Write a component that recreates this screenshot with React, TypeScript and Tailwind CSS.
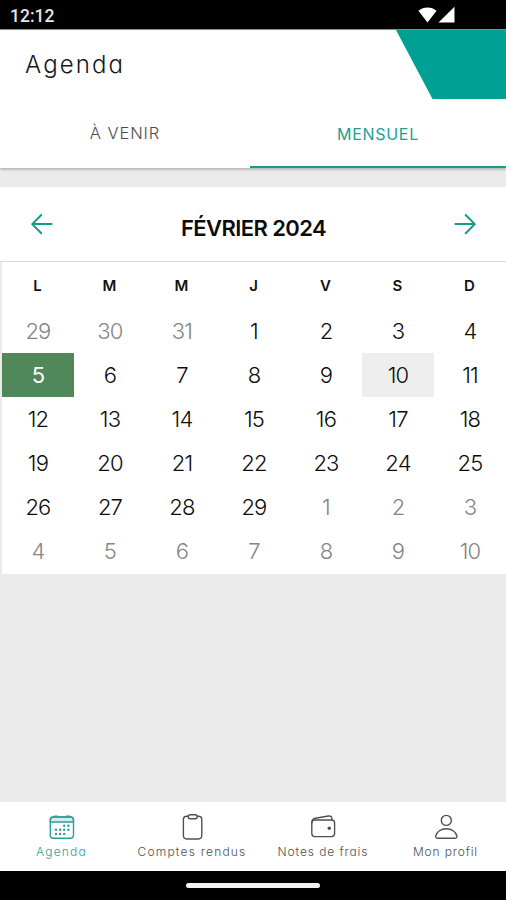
import React, { useState } from 'react';
import { clsx } from 'clsx';

interface Day {
  label: number;
  outside: boolean;
}

interface IconProps {
  className?: string;
  children?: React.ReactNode;
}

const weekDays = ['L', 'M', 'M', 'J', 'V', 'S', 'D'];

const range = (from: number, to: number, outside: boolean): Day[] =>
  Array.from({ length: to - from + 1 }, (_, i) => ({ label: from + i, outside }));

const days: Day[] = [...range(29, 31, true), ...range(1, 29, false), ...range(1, 10, true)];

const LineIcon: React.FC<IconProps> = ({ children }) => (
  <svg
    className="h-7 w-7"
    viewBox="0 0 28 28"
    fill="none"
    stroke="currentColor"
    strokeWidth="1.4"
    strokeLinecap="round"
    strokeLinejoin="round"
  >
    {children}
  </svg>
);

const dots = [
  [16.2, 12.7], [20.4, 12.7],
  [8, 16.8], [12.1, 16.8], [16.2, 16.8], [20.4, 16.8],
  [8, 21], [12.1, 21], [16.2, 21],
];

const CalendarIcon: React.FC = () => (
  <LineIcon>
    <path d="M2.3 9V7A3 3 0 0 1 5.3 4H22.5A3 3 0 0 1 25.5 7V9Z" fill="currentColor" fillOpacity="0.2" />
    <rect x="2.3" y="4" width="23.2" height="21.3" rx="3" />
    <path d="M6.5 3.3H9.5M18.5 3.3H21.5" strokeWidth="1.6" />
    {dots.map(([x, y]) => (
      <circle key={`${x}-${y}`} cx={x} cy={y} r="1.2" fill="currentColor" stroke="none" />
    ))}
  </LineIcon>
);

const ClipboardIcon: React.FC = () => (
  <LineIcon>
    <rect x="5.4" y="3.2" width="18.4" height="22.8" rx="3.4" />
    <rect x="10.2" y="1.7" width="9" height="4" rx="2" fill="white" />
  </LineIcon>
);

const WalletIcon: React.FC = () => (
  <LineIcon>
    <rect x="2.8" y="7" width="22.8" height="16.6" rx="3" />
    <path d="M2.9 9.5C2.9 6.8 4 5.8 6.3 5.3L19.5 3C21.5 2.7 22.8 3.6 22.8 5.3V7" />
    <circle cx="20.3" cy="15.3" r="1.7" fill="currentColor" stroke="none" />
  </LineIcon>
);

const ProfileIcon: React.FC = () => (
  <LineIcon>
    <circle cx="14.3" cy="7.4" r="5" />
    <path d="M5.4 25.2C4.1 25.2 3.5 24.4 3.7 23.2C4.6 18.6 9 15.7 14.3 15.7S24 18.6 24.9 23.2C25.1 24.4 24.5 25.2 23.2 25.2Z" />
  </LineIcon>
);

const navItems = [
  { label: 'Agenda', icon: CalendarIcon, tracking: 'tracking-[1.2px]' },
  { label: 'Comptes rendus', icon: ClipboardIcon, tracking: 'tracking-[1.2px]' },
  { label: 'Notes de frais', icon: WalletIcon, tracking: 'tracking-[0.9px]' },
  { label: 'Mon profil', icon: ProfileIcon, tracking: 'tracking-[0.85px]' },
];

const StatusBar: React.FC = () => (
  <div className="flex h-[29px] items-center justify-between bg-black pl-[10px] pr-[51px] pt-[2px] text-white">
    <span className="pt-[2px] font-[Roboto,sans-serif] text-[17.5px] font-medium leading-none text-[#e6e6e6]">12:12</span>
    <div className="flex items-end gap-[1px] pb-[2px]">
      <svg className="h-[17px] w-[19px]" viewBox="0 0 19 17" fill="currentColor">
        <path d="M0.4 4.8C5.5 0.3 13.5 0.3 18.6 4.8L9.5 16.5Z" />
      </svg>
      <svg className="h-[17px] w-[17px]" viewBox="0 0 17 17" fill="currentColor">
        <path d="M16.5 0.7V16.5H0.5Z" />
      </svg>
    </div>
  </div>
);

const Arrow: React.FC<IconProps> = ({ className }) => (
  <svg
    className={clsx('h-6 w-6', className)}
    viewBox="0 0 24 24"
    fill="none"
    stroke="currentColor"
    strokeWidth="2"
    strokeLinecap="round"
    strokeLinejoin="round"
  >
    <path d="M12.3 3L3.2 12.1L12.3 21.2M3.8 12.1H22.6" />
  </svg>
);

const Header: React.FC = () => (
  <header className="flex h-[70px] items-start justify-between border-t border-[#8c8c8c] bg-white">
    <h1 className="pl-[25px] pt-[19px] text-[24px] font-light leading-[32px] tracking-[2.1px] text-[#161616]">Agenda</h1>
    <svg className="h-[69px] w-[110px] text-[#00a094]" viewBox="0 0 110 69" fill="currentColor">
      <path d="M0 0H110V69H36.5Z" />
    </svg>
  </header>
);

const Tabs: React.FC = () => (
  <div className="flex h-[69px] bg-white text-[16.5px] shadow-[0_2px_2px_#00000033]">
    <button className="flex w-[250px] items-center justify-center font-light tracking-[0.9px] text-[#4e4e4e]">À VENIR</button>
    <button className="flex flex-1 items-center justify-center border-b-2 border-[#179b8e] pt-[2px] text-[16px] font-normal tracking-[0.7px] text-[#229f93]">
      MENSUEL
    </button>
  </div>
);

const Calendar: React.FC = () => {
  const [selected, setSelected] = useState(7);

  return (
    <section className="h-[387px] bg-white">
      <div className="flex h-[74px] items-start justify-between pl-[29px] pr-[28px] pt-[25px]">
        <button className="text-[#159a8e]">
          <Arrow />
        </button>
        <h2 className="pt-[1px] text-[22px] font-semibold leading-[30px] tracking-[-0.6px] text-[#0c0c0c]">FÉVRIER 2024</h2>
        <button className="text-[#159a8e]">
          <Arrow className="-scale-x-100" />
        </button>
      </div>
      <div className="h-[313px] border-l-2 border-t border-l-[#ebebeb] border-t-[#d9d9d9]">
        <div className="grid h-[47px] grid-cols-7">
          {weekDays.map((day, i) => (
            <span key={i} className="flex items-center justify-center pr-[1px] pt-[1px] text-[15px] font-semibold text-[#111111]">
              {day}
            </span>
          ))}
        </div>
        <div className="grid h-[265px] grid-cols-7 grid-rows-6">
          {days.map((day, i) => (
            <button
              key={i}
              onClick={() => setSelected(i)}
              className={clsx(
                'flex items-center justify-center text-[22px] tracking-[-0.8px]',
                i === selected && 'bg-[#50885a] font-normal text-white',
                i !== selected && 'font-light',
                i !== selected && (day.outside ? 'text-[#858585]' : 'text-[#0c0c0c]'),
                i === 12 && i !== selected && 'bg-[#eeeeee]'
              )}
            >
              {day.label}
            </button>
          ))}
        </div>
      </div>
    </section>
  );
};

const BottomNav: React.FC = () => (
  <nav className="grid h-[69px] grid-cols-[123px_138px_124px_121px] bg-white">
    {navItems.map(({ label, icon: Icon, tracking }, i) => (
      <button
        key={label}
        className={clsx('flex flex-col items-center pt-[11px]', i === 0 ? 'text-[#2aa196]' : 'text-[#505050]')}
      >
        <Icon />
        <span className={clsx('whitespace-nowrap pt-[1px] text-[12px] font-light leading-[20px]', tracking)}>{label}</span>
      </button>
    ))}
  </nav>
);

const App: React.FC = () => {
  return (
    <div className="flex h-[900px] w-[506px] flex-col overflow-hidden bg-[#ebebeb] font-[Inter,sans-serif] [font-feature-settings:'cv11']">
      <StatusBar />
      <Header />
      <Tabs />
      <main className="flex-1 pt-[19px]">
        <Calendar />
      </main>
      <BottomNav />
      <div className="flex h-[29px] justify-center bg-black pt-[12px]">
        <div className="h-[5px] w-[134px] rounded-full bg-[#f2f2f2]" />
      </div>
    </div>
  );
};

export default App;
